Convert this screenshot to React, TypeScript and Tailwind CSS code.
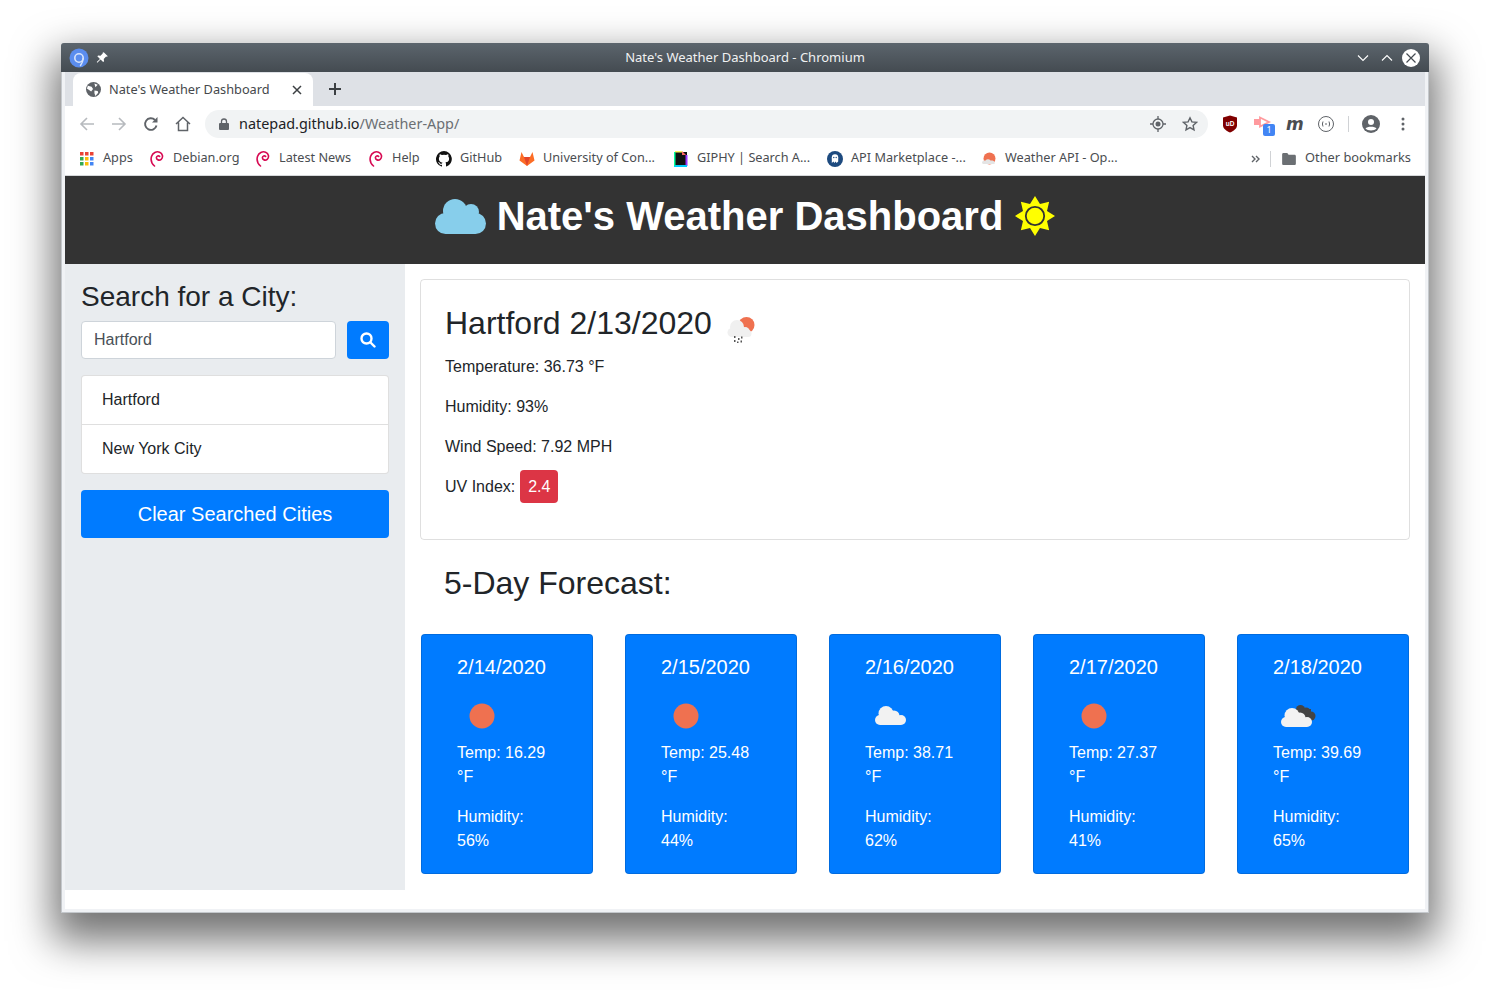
import React from "react";

const F = { fontFamily: '"Noto Sans", sans-serif' };

function Debian() {
  return (
    <svg width="16" height="18" viewBox="0 0 16 18" fill="none" stroke="#d70a53" strokeWidth="1.6" strokeLinecap="round">
      <path d="M5.5 16C2.5 13.5 1.5 10 2.5 6.5 3.7 2.8 7.5 1 10.6 2.2 13.8 3.5 14.4 7.4 12.2 9.3 10.3 10.9 7.3 9.8 7.4 7.6 7.5 6 9.6 5.3 10.6 6.4" />
    </svg>
  );
}

function Bookmark({ icon, label, className }: { icon: React.ReactNode; label: string; className: string }) {
  return (
    <div className={`flex items-center h-full shrink-0 ${className}`}>
      <div className="w-4 h-4 flex items-center justify-center">{icon}</div>
      <span className="ml-2 mb-[2px] text-[12.7px] text-[#4a4d51] whitespace-nowrap">{label}</span>
    </div>
  );
}

function Sun({ size }: { size: number }) {
  return (
    <svg width={size} height={size} viewBox="0 0 50 50">
      <circle cx="25" cy="25" r="12.5" fill="#ef7150" />
    </svg>
  );
}

function CloudShape() {
  return (
    <g fill="#f2f2f2">
      <circle cx="13" cy="31" r="5" />
      <circle cx="19" cy="24.500" r="7.500" />
      <circle cx="27" cy="27" r="5.500" />
      <circle cx="34" cy="31" r="5" />
      <rect x="13" y="28" width="21" height="8" />
    </g>
  );
}

function WhiteCloud() {
  return (
    <svg width="50" height="50" viewBox="0 0 50 50">
      <g transform="translate(2 -2)">
        <CloudShape />
      </g>
    </svg>
  );
}

function DarkCloud() {
  return (
    <svg width="50" height="50" viewBox="0 0 50 50">
      <g fill="#444">
        <circle cx="27.500" cy="18.500" r="4.500" />
        <circle cx="33" cy="20.500" r="4" />
        <circle cx="38" cy="25" r="4.500" />
        <rect x="26" y="18" width="12" height="10" />
      </g>
      <CloudShape />
    </svg>
  );
}

const days = [
  { d: "2/14/2020", t: "16.29", h: "56", i: <Sun size={50} /> },
  { d: "2/15/2020", t: "25.48", h: "44", i: <Sun size={50} /> },
  { d: "2/16/2020", t: "38.71", h: "62", i: <WhiteCloud /> },
  { d: "2/17/2020", t: "27.37", h: "41", i: <Sun size={50} /> },
  { d: "2/18/2020", t: "39.69", h: "65", i: <DarkCloud /> },
];

export default function App() {
  return (
    <div className="w-[1490px] h-[992px] bg-white overflow-hidden pt-[43px] pl-[61px]">
      <div className="w-[1368px] h-[870px] flex flex-col bg-[#f0f2f5] rounded-t-[3px] shadow-[inset_0_0_0_1px_#c4c8cc,0_20px_40px_8px_rgba(0,0,0,0.55)]" style={F}>
        {/* title bar */}
        <div className="h-[29px] shrink-0 flex items-center rounded-t-[3px] bg-gradient-to-b from-[#5c656d] to-[#444b51] px-[8px] relative">
          <svg width="20" height="20" viewBox="0 0 20 20">
            <circle cx="10" cy="10" r="9.500" fill="#5b8def" />
            <circle cx="10" cy="10" r="4.200" fill="none" stroke="#d8e4fb" strokeWidth="1.600" />
            <path d="M14.200 10c0 3-1 5-3 8" fill="none" stroke="#d8e4fb" strokeWidth="1.400" />
          </svg>
          <svg width="14" height="14" viewBox="0 0 24 24" fill="#fff" className="ml-[6px]">
            <path d="M15 2l7 7-2 1-1-.5-4 4 .5 4-1.500 1.500-4.500-4.500L4 20l-1-1 5.500-5.500L4 9l1.500-1.500 4 .5 4-4L13 3z" />
          </svg>
          <div className="absolute inset-x-0 text-center text-[13px] text-[#f0f1f2]">Nate's Weather Dashboard - Chromium</div>
          <div className="ml-auto flex items-center">
            <svg width="14" height="14" viewBox="0 0 14 14" fill="none" stroke="#fff" strokeWidth="1.100" className="mr-[10px]"><path d="M2 4.500l5 5 5-5" /></svg>
            <svg width="14" height="14" viewBox="0 0 14 14" fill="none" stroke="#fff" strokeWidth="1.100" className="mr-[8px]"><path d="M2 9.500l5-5 5 5" /></svg>
            <div className="w-[18px] h-[18px] rounded-full bg-white flex items-center justify-center mr-[1px]">
              <svg width="12" height="12" viewBox="0 0 12 12" stroke="#444b51" strokeWidth="1.200"><path d="M1.500 1.500l9 9M10.500 1.500l-9 9" /></svg>
            </div>
          </div>
        </div>

        {/* tab strip */}
        <div className="h-[34px] shrink-0 mx-[4px] bg-[#dee1e6] flex items-end pl-[8px]">
          <div className="w-[240px] h-[33px] bg-white rounded-t-[8px] flex items-center pl-[13px]">
            <svg width="15" height="15" viewBox="0 0 16 16">
              <circle cx="8" cy="8" r="8" fill="#5f6368" />
              <path d="M2 4l4 1 1.500 2.500L5.500 10 1 7zM9 1.500l3.500 1.500L10 5.500zM9 9l3.500.5.500 2L10 15l-1-3z" fill="#fff" />
            </svg>
            <span className="ml-[8px] text-[12.75px] text-[#45484c] whitespace-nowrap">Nate's Weather Dashboard</span>
            <svg width="10" height="10" viewBox="0 0 10 10" stroke="#3c4043" strokeWidth="1.500" className="ml-auto mr-[11px]"><path d="M1 1l8 8M9 1l-8 8" /></svg>
          </div>
          <svg width="14" height="14" viewBox="0 0 14 14" stroke="#3c4043" strokeWidth="2" className="ml-[15px] mb-[10px]"><path d="M7 1v12M1 7h12" /></svg>
        </div>

        {/* toolbar */}
        <div className="h-[36px] shrink-0 mx-[4px] bg-white flex items-center pl-[14px] pr-[14px]">
          <svg width="16" height="16" viewBox="0 0 16 16" fill="none" stroke="#b7babe" strokeWidth="1.600"><path d="M15 8H2M8 2L2 8l6 6" /></svg>
          <svg width="16" height="16" viewBox="0 0 16 16" fill="none" stroke="#b7babe" strokeWidth="1.600" className="ml-[16px]"><path d="M1 8h13M8 2l6 6-6 6" /></svg>
          <svg width="16" height="16" viewBox="0 0 16 16" fill="none" className="ml-[16px]"><path d="M13.500 9.500A5.800 5.800 0 1 1 12 4" stroke="#5f6368" strokeWidth="1.900" /><path d="M14.500 1v5.500H9z" fill="#5f6368" /></svg>
          <svg width="16" height="16" viewBox="0 0 16 16" fill="none" stroke="#5f6368" strokeWidth="1.500" className="ml-[16px]"><path d="M1 8l7-6.500L15 8M3.500 6.500V14.500h9V6.500" /></svg>
          <div className="ml-[14px] w-[1003px] h-[28px] rounded-full bg-[#f1f3f4] flex items-center pl-[14px] pr-[10px]">
            <svg width="10" height="12" viewBox="0 0 10 12"><rect y="5" width="10" height="7" rx="1" fill="#5f6368" /><path d="M2.500 5.500V3.500a2.500 2.500 0 0 1 5 0v2" fill="none" stroke="#5f6368" strokeWidth="1.300" /></svg>
            <span className="ml-[10px] text-[14.4px] text-[#202124]">natepad.github.io<span className="text-[#6b6f73]">/Weather-App/</span></span>
            <svg width="16" height="16" viewBox="0 0 16 16" fill="none" stroke="#5f6368" strokeWidth="1.300" className="ml-auto"><circle cx="8" cy="8" r="5" /><circle cx="8" cy="8" r="2.500" fill="#5f6368" stroke="none" /><path d="M8 0v3M8 13v3M0 8h3M13 8h3" /></svg>
            <svg width="16" height="16" viewBox="0 0 16 16" fill="none" stroke="#5f6368" strokeWidth="1.400" className="ml-[16px]"><path d="M8 1.800l1.900 4.100 4.500.5-3.300 3 .9 4.400L8 11.600l-4 2.200.9-4.400-3.300-3 4.500-.5z" /></svg>
          </div>
          <svg width="16" height="18" viewBox="0 0 16 18" className="ml-[14px]"><path d="M1 2.500L8 .5l7 2v8c0 3-3.500 5.500-7 7-3.500-1.500-7-4-7-7z" fill="#800000" /><text x="8" y="10.500" fontSize="6.500" fontWeight="700" fill="#fff" textAnchor="middle" fontFamily="Liberation Sans">uD</text></svg>
          <div className="relative ml-[16px] w-[20px] h-[18px]">
            <svg width="18" height="14" viewBox="0 0 18 14"><path d="M6 2.500l9 4.500-9 4.500z" fill="none" stroke="#ff9a9e" strokeWidth="1.800" /><rect x="0" y="4" width="6" height="6" fill="#ff9a9e" /></svg>
            <div className="absolute left-[9px] top-[9px] w-[12px] h-[12px] rounded-[2px] bg-[#4285f4] text-white text-[9px] leading-[12px] text-center">1</div>
          </div>
          <span className="ml-[12px] w-[16px] text-[17px] italic font-bold text-[#4a4d51] leading-none" style={{ fontFamily: '"DejaVu Sans", sans-serif' }}>m</span>
          <svg width="18" height="18" viewBox="0 0 18 18" fill="none" stroke="#5f6368" strokeWidth="1" className="ml-[15px]"><circle cx="9" cy="9" r="7.500" /><path d="M6 6.500Q4.800 9 6 11.500M12 6.500Q13.200 9 12 11.500M8 9h2" /></svg>
          <div className="ml-[13px] w-px h-[16px] bg-[#d0d2d5]" />
          <svg width="18" height="18" viewBox="0 0 18 18" className="ml-[13px]"><circle cx="9" cy="9" r="9" fill="#5f6368" /><circle cx="9" cy="7" r="3" fill="#fff" /><path d="M3.500 13.500C5 11.300 13 11.300 14.500 13.500 12.500 16 5.500 16 3.500 13.500z" fill="#fff" /></svg>
          <svg width="4" height="14" viewBox="0 0 4 14" fill="#5f6368" className="ml-[21px]"><circle cx="2" cy="2" r="1.500" /><circle cx="2" cy="7" r="1.500" /><circle cx="2" cy="12" r="1.500" /></svg>
        </div>

        {/* bookmarks */}
        <div className="h-[34px] shrink-0 mx-[4px] bg-white border-b border-[#d6d8da] flex items-center pl-[14px] pr-[14px]">
          <Bookmark className="w-[70px]" label="Apps" icon={
            <svg width="14" height="14" viewBox="0 0 14 14">
              {[["#ea4335","#ea4335","#ea4335"],["#34a853","#fbbc05","#4285f4"],["#34a853","#fbbc05","#4285f4"]].map((r, y) => r.map((c, x) => <rect key={`${x}${y}`} x={x * 5} y={y * 5} width="3.500" height="3.500" fill={c} />))}
            </svg>} />
          <Bookmark className="w-[106px]" label="Debian.org" icon={<Debian />} />
          <Bookmark className="w-[113px]" label="Latest News" icon={<Debian />} />
          <Bookmark className="w-[68px]" label="Help" icon={<Debian />} />
          <Bookmark className="w-[83px]" label="GitHub" icon={
            <svg width="16" height="16" viewBox="0 0 16 16" fill="#111"><path d="M8 0a8 8 0 0 0-2.500 15.600c.4.1.5-.2.5-.4v-1.400c-2.200.5-2.700-1-2.700-1-.4-.9-.9-1.200-.9-1.200-.7-.5.1-.5.1-.5.8.1 1.200.8 1.200.8.7 1.200 1.900.9 2.300.7.1-.5.300-.9.500-1.100-1.800-.2-3.600-.9-3.600-4 0-.9.3-1.600.8-2.100-.1-.2-.4-1 .1-2.100 0 0 .7-.2 2.200.8a7.600 7.600 0 0 1 4 0c1.500-1 2.200-.8 2.200-.8.4 1.100.2 1.900.1 2.100.5.600.8 1.300.8 2.100 0 3.100-1.900 3.700-3.700 3.900.3.3.6.8.6 1.500v2.200c0 .2.1.5.600.4A8 8 0 0 0 8 0z" /></svg>} />
          <Bookmark className="w-[154px]" label="University of Con..." icon={
            <svg width="16" height="15" viewBox="0 0 16 15"><path d="M8 15L.5 9.500 2.500 1 5 6h6l2.500-5 2 8.500z" fill="#fc6d26" /><path d="M8 15L5 6h6z" fill="#e24329" /></svg>} />
          <Bookmark className="w-[154px]" label="GIPHY | Search A..." icon={
            <svg width="14" height="16" viewBox="0 0 14 16"><rect x="1" y="1" width="12" height="14" fill="#111" /><path d="M1 0h7v1.500H1z" fill="#fff35c" /><path d="M8 0l4 4h-4z" fill="#ff6666" /><rect x="11.500" y="4" width="2" height="11" fill="#9933ff" /><rect x="0" y="14" width="13" height="2" fill="#00ccff" /><rect x="0" y="1" width="1.500" height="14" fill="#00ff99" /></svg>} />
          <Bookmark className="w-[154px]" label="API Marketplace -..." icon={
            <svg width="16" height="16" viewBox="0 0 16 16"><circle cx="8" cy="8" r="8" fill="#1d4a7f" /><circle cx="8" cy="6.500" r="3.200" fill="#fff" /><path d="M4.800 6.500v5.500l1.600-1.500 1 1.500 1.200-1.500 1 1.500 1.600-1.500V6.500z" fill="#fff" /><circle cx="6.800" cy="6.500" r=".7" fill="#1d4a7f" /><circle cx="9.200" cy="6.500" r=".7" fill="#1d4a7f" /></svg>} />
          <Bookmark className="w-[130px]" label="Weather API - Op..." icon={
            <svg width="16" height="16" viewBox="0 0 16 16"><circle cx="8.500" cy="7.500" r="6" fill="#ef7150" /><path d="M1 12a2.500 2.500 0 0 1 2.500-2.500h1a3 3 0 0 1 5 0h2a2.500 2.500 0 0 1 2 3.500H2.500A2.500 2.500 0 0 1 1 12z" fill="#e4e4e4" /></svg>} />
          <svg width="10" height="10" viewBox="0 0 10 10" fill="none" stroke="#5f6368" strokeWidth="1.400" className="ml-auto"><path d="M1 2l3 3-3 3M5 2l3 3-3 3" /></svg>
          <div className="ml-[9px] w-px h-[16px] bg-[#d0d2d5]" />
          <svg width="14" height="12" viewBox="0 0 16 14" fill="#6b6f73" className="ml-[11px]"><path d="M0 1.500C0 .7.700 0 1.500 0H6l1.500 2h7c.8 0 1.500.7 1.500 1.500v9c0 .8-.7 1.500-1.500 1.500h-13C.7 14 0 13.300 0 12.500z" /></svg>
          <span className="ml-[9px] mb-[2px] text-[12.8px] text-[#4a4d51] whitespace-nowrap">Other bookmarks</span>
        </div>

        {/* page */}
        <div className="flex-1 mx-[4px] mb-[4px] bg-white flex flex-col min-h-0 text-[#212529]" style={{ fontFamily: '"Liberation Sans", sans-serif' }}>
          <div className="h-[88px] shrink-0 bg-[#333333] flex items-center justify-center text-white pb-[8px] pl-[1px]">
            <svg width="51" height="35" viewBox="0 0 51 35" className="mr-[11px]">
              <g fill="#87ceeb">
                <circle cx="10.500" cy="24.500" r="10.500" />
                <circle cx="20" cy="12" r="12" />
                <circle cx="36" cy="13" r="8" />
                <circle cx="40.500" cy="24.500" r="10.500" />
                <rect x="10.500" y="14" width="30" height="21" />
              </g>
            </svg>
            <h1 className="text-[40px] font-bold leading-[48px]">Nate's Weather Dashboard</h1>
            <svg width="42" height="42" viewBox="0 0 42 42" className="ml-[11px]">
              <polygon points="21,1 25.97,8.99 35.14,6.86 33.01,15.97 41,21 33.01,26.03 35.14,35.14 25.97,33.01 21,41 16.03,33.01 6.86,35.14 8.99,26.03 1,21 8.99,15.97 6.86,6.86 16.03,8.99" fill="#ffff00" />
              <circle cx="21" cy="21" r="9.200" fill="#ffff00" stroke="#333" strokeWidth="1.800" />
            </svg>
          </div>

          <div className="flex items-start">
            {/* sidebar */}
            <div className="w-[340px] h-[626px] shrink-0 bg-[#e9ecef] px-[16px] pt-[16px]">
              <h3 className="text-[28px] leading-[33.600px] mb-[7px]">Search for a City:</h3>
              <div className="flex">
                <div className="w-[255px] h-[38px] bg-white border border-[#ced4da] rounded-[4px] px-[12px] flex items-center text-[#495057]">Hartford</div>
                <div className="ml-[11px] w-[42px] h-[38px] rounded-[4px] bg-[#007bff] flex items-center justify-center">
                  <svg width="16" height="16" viewBox="0 0 16 16" fill="none" stroke="#fff" strokeWidth="2.400" strokeLinecap="round"><circle cx="6.500" cy="6.500" r="5" /><path d="M10.500 10.500L14.500 14.500" /></svg>
                </div>
              </div>
              <div className="mt-[16px] bg-white border border-[rgba(0,0,0,0.125)] rounded-[4px]">
                <div className="h-[49px] px-[20px] flex items-center border-b border-[rgba(0,0,0,0.125)]">Hartford</div>
                <div className="h-[48px] px-[20px] flex items-center">New York City</div>
              </div>
              <div className="mt-[16px] h-[48px] rounded-[4px] bg-[#007bff] text-white text-[20px] leading-[48px] text-center">Clear Searched Cities</div>
            </div>

            {/* main */}
            <div className="flex-1 pl-[15px] pr-[15px] pt-[15px]">
              <div className="h-[261px] border border-[rgba(0,0,0,0.125)] rounded-[4px] px-[24px] pt-[24px]">
                <div className="flex items-center h-[38px]">
                  <h2 className="text-[32px] leading-[38.400px]">Hartford 2/13/2020</h2>
                  <svg width="50" height="50" viewBox="0 0 50 50" className="mt-[14px] ml-[4px]">
                    <circle cx="30.500" cy="20" r="8" fill="#ef7150" />
                    <g fill="#f0f0f0">
                      <circle cx="16" cy="27.500" r="4.500" />
                      <circle cx="21" cy="22" r="7" />
                      <circle cx="29" cy="27" r="5" />
                      <circle cx="32" cy="28.500" r="3.500" />
                      <rect x="16" y="24" width="16" height="8" />
                    </g>
                    <g fill="#555">
                      <rect x="18" y="31" width="1.500" height="2" />
                      <rect x="22" y="33" width="1.500" height="2" />
                      <rect x="25" y="31.500" width="1.500" height="2" />
                      <rect x="18" y="35" width="1.500" height="2" />
                      <rect x="21" y="36.500" width="1.500" height="1.500" />
                      <rect x="24.500" y="35.500" width="1.500" height="2" />
                    </g>
                  </svg>
                </div>
                <p className="mt-[13px] leading-[24px]">Temperature: 36.73 °F</p>
                <p className="mt-[16px] leading-[24px]">Humidity: 93%</p>
                <p className="mt-[16px] leading-[24px]">Wind Speed: 7.92 MPH</p>
                <p className="mt-[11px] leading-[33px] flex items-center">UV Index:<span className="ml-[5px] w-[38px] h-[33px] rounded-[4px] bg-[#dc3545] text-white flex items-center justify-center">2.4</span></p>
              </div>
              <h2 className="text-[32px] leading-[38.400px] mt-[24px] ml-[24px]">5-Day Forecast:</h2>
              <div className="mt-[32px] flex justify-between px-[1px]">
                {days.map((x) => (
                  <div key={x.d} className="w-[172px] h-[240px] bg-[#007bff] border border-[rgba(0,0,0,0.125)] rounded-[4px] pl-[35px] pr-[35px] pt-[20px] text-white">
                    <div className="text-[20px] leading-[24px]">{x.d}</div>
                    <div className="h-[50px] mt-[12px]">{x.i}</div>
                    <div className="leading-[24px]">Temp: {x.t}<br />°F</div>
                    <div className="mt-[16px] leading-[24px]">Humidity:<br />{x.h}%</div>
                  </div>
                ))}
              </div>
            </div>
          </div>
        </div>
      </div>
    </div>
  );
}
